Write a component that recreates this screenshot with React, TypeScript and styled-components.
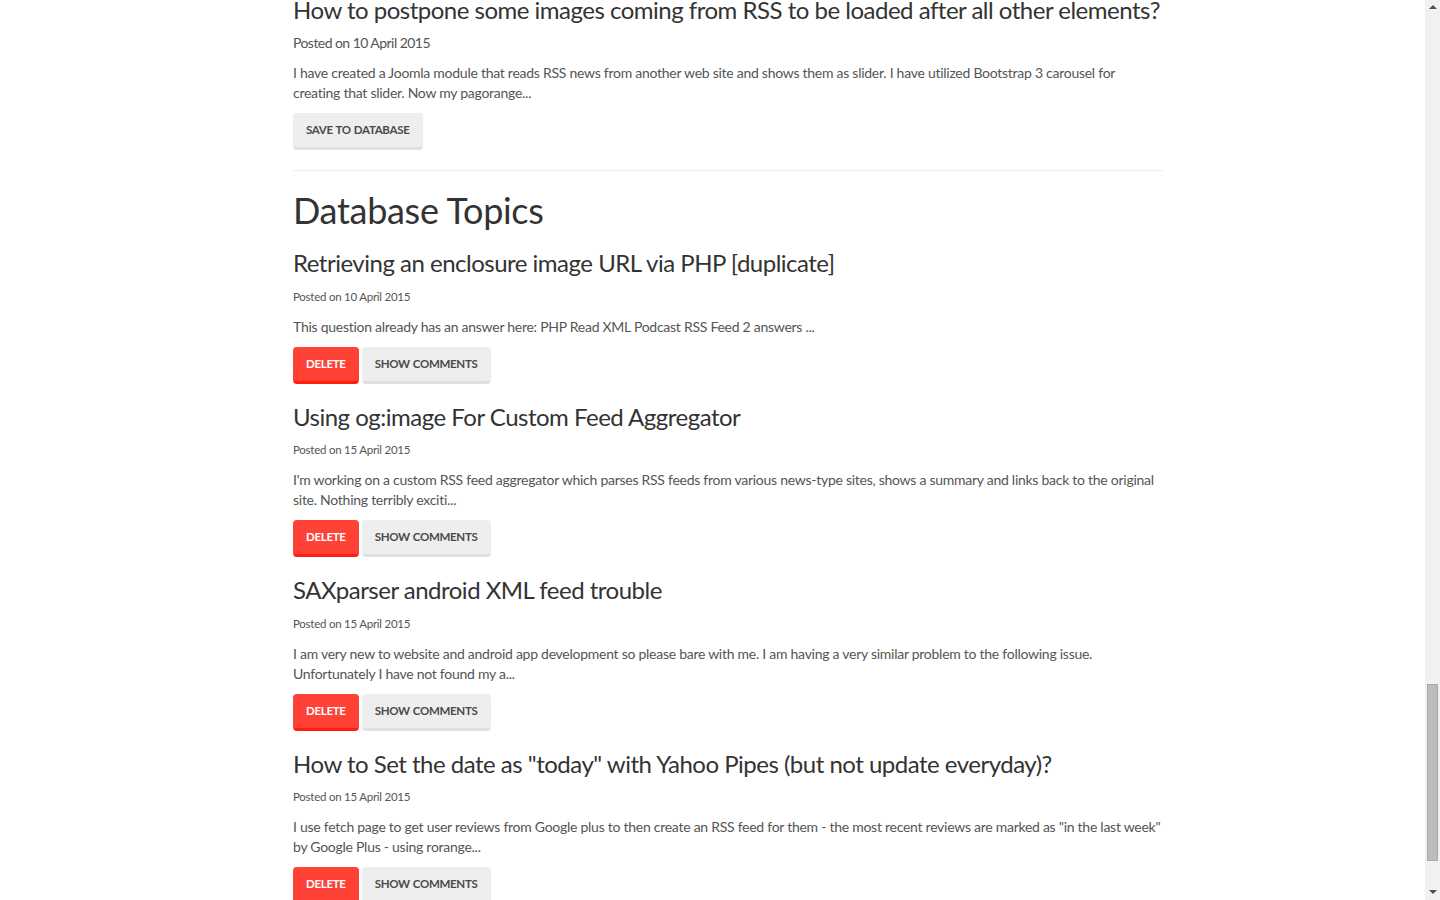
import React from "react";
import styled, { createGlobalStyle } from "styled-components";

const GlobalStyle = createGlobalStyle`
  html, body {
    margin: 0;
    padding: 0;
    height: 100%;
    overflow: hidden;
    background: #ffffff;
  }
  body {
    font-family: Lato, "Open Sans", "Liberation Sans", sans-serif;
    font-size: 14px;
    line-height: 20px;
    letter-spacing: -0.265px;
    color: #555555;
  }
`;

const Frame = styled.div`
  display: flex;
  width: 1440px;
  height: 900px;
  overflow: hidden;
`;

const Viewport = styled.main`
  flex: 1;
  height: 900px;
  overflow: hidden;
`;

const Content = styled.div`
  display: flow-root;
  width: 870px;
  margin: -23.5px 0 0 293px;
`;

const Item = styled.article``;

const Title = styled.h3`
  margin: 20px 0 10px;
  font-size: 24px;
  line-height: 1.1;
  font-weight: 400;
  letter-spacing: -0.5px;
  color: #333333;
`;

const SectionTitle = styled.h1`
  margin: 20px 0 10px;
  font-size: 36px;
  line-height: 1.1;
  font-weight: 400;
  letter-spacing: -0.3px;
  color: #333333;
`;

const Meta = styled.p<{ $small?: boolean }>`
  margin: 0 0 10px;
  font-size: ${(p) => (p.$small ? "11.5px" : "14px")};
  letter-spacing: ${(p) => (p.$small ? "-0.25px" : "-0.55px")};
`;

const Text = styled.p`
  margin: 0 0 10px;
`;

const Divider = styled.hr`
  margin: 20px 0;
  border: 0;
  border-top: 1px solid #eeeeee;
`;

const ButtonRow = styled.div`
  display: flex;
  gap: 3px;
`;

const Button = styled.button<{ $variant?: "danger" | "default" }>`
  margin: 0;
  padding: 8px 12px;
  border-style: solid;
  border-width: 0 1px 3px 1px;
  border-radius: 4px;
  font-family: Lato, "Open Sans", "Liberation Sans", sans-serif;
  font-size: 11.5px;
  line-height: 18px;
  font-weight: 700;
  letter-spacing: -0.3px;
  word-spacing: 0.5px;
  text-transform: uppercase;
  cursor: pointer;
  background: ${(p) => (p.$variant === "danger" ? "#ff4136" : "#eeeeee")};
  color: ${(p) => (p.$variant === "danger" ? "#ffffff" : "#4a4a4a")};
  border-color: ${(p) => (p.$variant === "danger" ? "#ff4136" : "#eeeeee")};
  border-bottom-color: ${(p) => (p.$variant === "danger" ? "#ff1e0e" : "#e0e0e0")};
`;

const Scrollbar = styled.aside`
  width: 15px;
  height: 900px;
  background: #f1f1f1;
  display: flex;
  flex-direction: column;
`;

const Arrow = styled.div<{ $dir: "up" | "down" }>`
  height: ${(p) => (p.$dir === "up" ? "13px" : "16px")};
  display: flex;
  align-items: center;
  justify-content: center;
  &::before {
    content: "";
    width: 0;
    height: 0;
    border-left: 4px solid transparent;
    border-right: 4px solid transparent;
    ${(p) =>
      p.$dir === "up"
        ? "border-bottom: 4px solid #505050;"
        : "border-top: 4px solid #505050;"}
  }
`;

const Track = styled.div`
  flex: 1;
  display: flex;
  flex-direction: column;
`;

const Thumb = styled.div`
  margin: 671px 2px 0 2px;
  height: 177px;
  box-sizing: border-box;
  background: #bcbcbc;
  border: 1px solid #a9a9a9;
`;

type Post = { title: string; date: string; text: string };

const posts: Post[] = [
  {
    title: "Retrieving an enclosure image URL via PHP [duplicate]",
    date: "10 April 2015",
    text: "This question already has an answer here: PHP Read XML Podcast RSS Feed 2 answers ...",
  },
  {
    title: "Using og:image For Custom Feed Aggregator",
    date: "15 April 2015",
    text: "I'm working on a custom RSS feed aggregator which parses RSS feeds from various news-type sites, shows a summary and links back to the original site. Nothing terribly exciti...",
  },
  {
    title: "SAXparser android XML feed trouble",
    date: "15 April 2015",
    text: "I am very new to website and android app development so please bare with me. I am having a very similar problem to the following issue. Unfortunately I have not found my a...",
  },
  {
    title: 'How to Set the date as "today" with Yahoo Pipes (but not update everyday)?',
    date: "15 April 2015",
    text: 'I use fetch page to get user reviews from Google plus to then create an RSS feed for them - the most recent reviews are marked as "in the last week" by Google Plus - using rorange...',
  },
];

export default function App() {
  return (
    <>
      <GlobalStyle />
      <Frame>
        <Viewport>
          <Content>
            <Item>
              <Title>How to postpone some images coming from RSS to be loaded after all other elements?</Title>
              <Meta>Posted on 10 April 2015</Meta>
              <Text>
                I have created a Joomla module that reads RSS news from another web site and shows them as slider. I have utilized Bootstrap 3 carousel for creating that slider. Now my pagorange...
              </Text>
              <ButtonRow>
                <Button $variant="default">Save to database</Button>
              </ButtonRow>
            </Item>
            <Divider />
            <SectionTitle>Database Topics</SectionTitle>
            {posts.map((p) => (
              <Item key={p.title}>
                <Title>{p.title}</Title>
                <Meta $small>Posted on {p.date}</Meta>
                <Text>{p.text}</Text>
                <ButtonRow>
                  <Button $variant="danger">Delete</Button>
                  <Button $variant="default">Show comments</Button>
                </ButtonRow>
              </Item>
            ))}
          </Content>
        </Viewport>
        <Scrollbar>
          <Arrow $dir="up" />
          <Track>
            <Thumb />
          </Track>
          <Arrow $dir="down" />
        </Scrollbar>
      </Frame>
    </>
  );
}
